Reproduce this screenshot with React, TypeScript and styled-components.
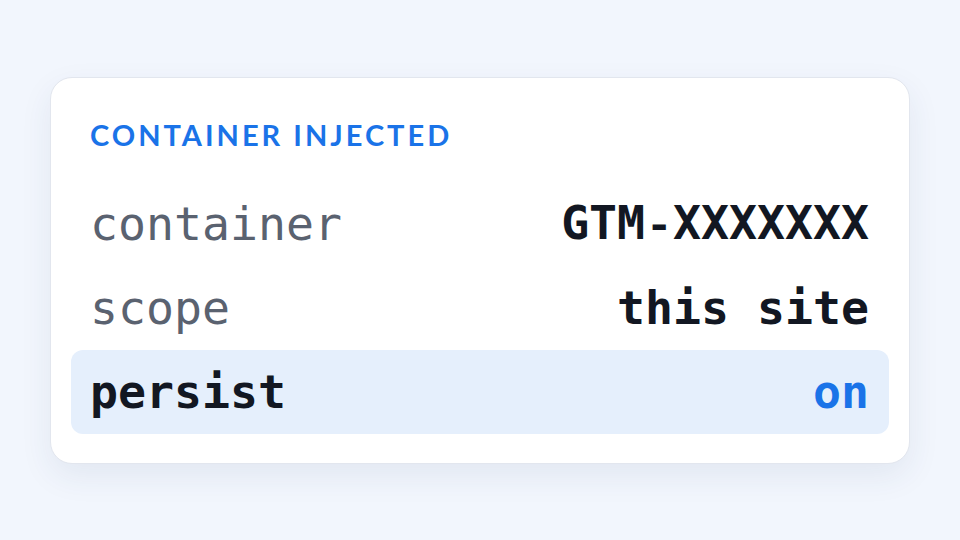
import React from "react";
import styled, { createGlobalStyle } from "styled-components";

const Global = createGlobalStyle`
  html, body { margin: 0; padding: 0; }
  body { background: #f2f6fd; }
`;

const Page = styled.div`
  width: 960px;
  height: 540px;
  display: flex;
  align-items: center;
  justify-content: center;
  background: #f2f6fd;
`;

const Card = styled.div`
  box-sizing: border-box;
  width: 860px;
  height: 387px;
  margin-top: 1px;
  background: #ffffff;
  border: 1px solid #e2e6ee;
  border-radius: 22px;
  padding: 43px 20px 0;
  box-shadow: 0 12px 32px rgba(40, 60, 100, 0.08);
  display: flex;
  flex-direction: column;
`;

const Title = styled.div`
  font-family: Lato, "Noto Sans", sans-serif;
  font-weight: 700;
  font-size: 29px;
  line-height: 28px;
  height: 28px;
  letter-spacing: 3px;
  color: #1a73e8;
  padding: 0 19px;
  margin-bottom: 33px;
  white-space: nowrap;
`;

const Row = styled.div<{ $active?: boolean }>`
  height: 84px;
  display: flex;
  align-items: center;
  justify-content: space-between;
  padding: 0 20px 0 19px;
  border-radius: 12px;
  background: ${(p) => (p.$active ? "#e5effc" : "transparent")};
  font-family: "DejaVu Sans Mono", "Liberation Mono", monospace;
  font-size: 46.5px;
`;

const Key = styled.span<{ $active?: boolean }>`
  color: ${(p) => (p.$active ? "#121722" : "#5a6270")};
  font-weight: ${(p) => (p.$active ? 700 : 400)};
`;

const Value = styled.span<{ $accent?: boolean }>`
  color: ${(p) => (p.$accent ? "#1a73e8" : "#121722")};
  font-weight: 700;
`;

const Dash = styled.span`
  font-family: "Liberation Mono", monospace;
`;

const renderValue = (v: string) => {
  const i = v.indexOf("-");
  if (i < 0) return v;
  return (
    <>
      {v.slice(0, i)}
      <Dash>-</Dash>
      {v.slice(i + 1)}
    </>
  );
};

const rows = [
  { k: "container", v: "GTM-XXXXXXX" },
  { k: "scope", v: "this site" },
  { k: "persist", v: "on", active: true },
];

export default function App() {
  return (
    <>
      <Global />
      <Page>
        <Card>
          <Title>CONTAINER INJECTED</Title>
          {rows.map((r) => (
            <Row key={r.k} $active={r.active}>
              <Key $active={r.active}>{r.k}</Key>
              <Value $accent={r.active}>{renderValue(r.v)}</Value>
            </Row>
          ))}
        </Card>
      </Page>
    </>
  );
}
